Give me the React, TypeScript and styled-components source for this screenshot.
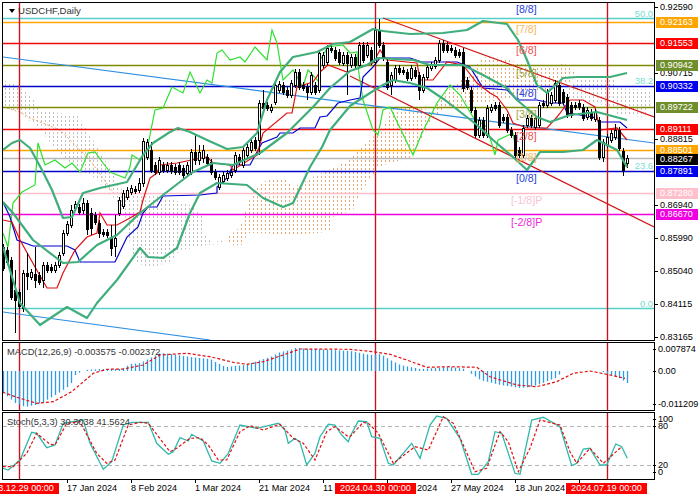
import React from "react";
import styled, { createGlobalStyle } from "styled-components";

type Pt = [number, number];
const FONT = `"Liberation Sans", Arial, sans-serif`;

const GlobalStyle = createGlobalStyle`
  html, body { margin: 0; padding: 0; background: #fff; }
  #root { width: 700px; height: 500px; }
`;

const Screen = styled.div`
  width: 700px;
  height: 500px;
  box-sizing: border-box;
  padding: 2px 0 0 2px;
  overflow: hidden;
  display: flex;
  flex-direction: column;
  background: #fff;
  font-family: ${FONT};
`;
const PaneRow = styled.div<{ $h: number; $gap: number }>`
  display: flex;
  flex: none;
  height: ${(p) => p.$h}px;
  margin-bottom: ${(p) => p.$gap}px;
`;
const Plot = styled.div`
  position: relative;
  flex: none;
  width: 653px;
  box-sizing: border-box;
  border: 1px solid #000;
  overflow: hidden;
  svg { display: block; }
`;
const Axis = styled.div<{ $rows: string; $inset: number }>`
  position: relative;
  flex: 1;
  display: grid;
  grid-template-rows: ${(p) => p.$rows};
  padding-left: ${(p) => p.$inset}px;
  padding-top: ${(p) => (p.$inset === 5 ? 0 : 2)}px;
  box-sizing: border-box;
`;
const AxisLabel = styled.span`
  position: relative;
  height: 10px;
  line-height: 10px;
  font-size: 9.1px;
  color: #000;
  white-space: nowrap;
  &::before {
    content: "";
    position: absolute;
    left: -5px;
    top: 5px;
    width: 3px;
    height: 1px;
    background: #000;
  }
`;
const AxisTag = styled.span<{ $bg: string }>`
  position: absolute;
  left: 1px;
  width: 42px;
  box-sizing: border-box;
  padding-left: 4px;
  height: 11px;
  line-height: 11px;
  font-size: 9.1px;
  background: ${(p) => p.$bg};
  color: #fff;
  white-space: nowrap;
`;
const PaneTitle = styled.span`
  position: absolute;
  left: 4px;
  top: 3px;
  font-size: 9.3px;
  line-height: 12px;
  color: #333;
  white-space: nowrap;
`;
const SymbolBar = styled.div`
  position: absolute;
  left: 6px;
  top: 2px;
  display: flex;
  align-items: center;
  gap: 3px;
  font-size: 9.6px;
  line-height: 12px;
  color: #333;
`;
const Caret = styled.i`
  display: block;
  width: 0;
  height: 0;
  border-left: 3.5px solid transparent;
  border-right: 3.5px solid transparent;
  border-top: 4px solid #000;
`;
const TimeAxis = styled.div`
  position: relative;
  flex: 1;
  margin-left: -2px;
  padding-left: 67px;
  display: grid;
  grid-template-columns: repeat(9, 64px);
`;
const TimeLabel = styled.span<{ $pad?: number }>`
  position: relative;
  padding-top: 3px;
  padding-left: ${(p) => p.$pad || 0}px;
  font-size: 9.1px;
  line-height: 11px;
  color: #000;
  white-space: nowrap;
  &::before {
    content: "";
    position: absolute;
    left: 0;
    top: 0;
    width: 1px;
    height: 3px;
    background: #000;
  }
`;
const TimeTag = styled.span`
  position: absolute;
  top: 3px;
  z-index: 1;
  box-sizing: border-box;
  width: 81px;
  height: 11px;
  line-height: 11px;
  font-size: 9.1px;
  text-align: center;
  background: #f00;
  color: #fff;
  white-space: nowrap;
`;
const ChartText = styled.text<{ $c: string; $size: number }>`
  font-family: ${FONT};
  font-size: ${(p) => p.$size}px;
  fill: ${(p) => p.$c};
`;

/* ---------- data: everything is in page pixels ---------- */
const z = (pts: number[][], ox: number, oy: number): Pt[] =>
  pts.map(([x, y]) => [ox + x / 3, oy + y / 3]);
const pl = (pts: Pt[]) => pts.map((p) => `${p[0].toFixed(1)},${p[1].toFixed(1)}`).join(" ");
const interp = (pts: Pt[], x: number) => {
  for (let i = 1; i < pts.length; i++) {
    if (x <= pts[i][0]) {
      const [a, b] = pts[i - 1];
      const [c, d] = pts[i];
      return b + ((d - b) * (x - a)) / (c - a || 1);
    }
  }
  return pts[pts.length - 1][1];
};

const hLines: [number, string][] = [
  [18.5, "#55d0c8"], [22.5, "#ffa500"], [43.5, "#f00a0a"], [65.5, "#808a00"], [86.5, "#0000c8"],
  [107.5, "#808a00"], [129.5, "#f00a0a"], [150.5, "#ffa500"], [158.5, "#b8b8b8"], [171.5, "#0000c8"],
  [193.5, "#ffbccb"], [214.5, "#f000e0"], [308.5, "#55d0c8"],
];

const upper: Pt[] = [[3,150],[12,143],[20,140],[30,148],[42,170],[52,190],[63,218],[72,217],[83,193],[100,188],[127,182],[143,155],[153,143],[170,132],[178,128],[190,132],[207,140],[227,149],[243,147],[257,133],[267,100],[280,72],[293,57],[317,52],[333,44],[350,42],[373,29],[383,31],[410,34],[443,33],[467,30],[483,21],[507,24],[518,40],[527,60],[537,85],[547,93],[563,78],[577,77],[610,77],[627,73]];
const middle: Pt[] = [[3,202],[13,213],[33,240],[63,263],[78,262],[97,245],[117,235],[140,213],[163,195],[193,172],[213,163],[233,165],[260,153],[287,133],[313,107],[330,88],[350,71],[367,65],[378,58],[413,60],[430,65],[463,65],[483,75],[507,88],[517,100],[537,117],[550,122],[570,115],[597,112],[627,120]];
const lower: Pt[] = [[3,247],[13,280],[20,303],[40,325],[67,307],[87,318],[97,303],[117,280],[140,248],[148,257],[163,258],[177,248],[190,213],[200,193],[217,183],[247,185],[263,198],[283,207],[293,203],[310,167],[322,147],[330,130],[350,106],[370,93],[383,85],[393,80],[410,83],[427,88],[445,100],[477,125],[493,140],[513,157],[527,170],[540,152],[563,152],[583,150],[597,140],[617,150],[627,167]];
const tenkan: Pt[] = [[3,220],[12,222],[20,240],[35,267],[47,288],[57,288],[63,273],[75,250],[87,237],[97,233],[100,213],[107,225],[117,225],[130,218],[140,212],[143,200],[150,178],[157,173],[160,165],[177,163],[207,157],[213,163],[230,165],[233,170],[257,155],[263,133],[287,113],[292,113],[297,87],[313,82],[320,72],[328,65],[347,72],[373,63],[380,50],[387,60],[417,63],[420,80],[433,80],[447,62],[463,65],[477,83],[490,93],[497,97],[507,110],[513,123],[527,128],[547,128],[557,117],[570,100],[583,100],[595,107],[600,130],[617,128],[627,140]];
const kijun: Pt[] = [[3,202],[10,217],[17,240],[33,246],[67,246],[75,250],[80,262],[115,262],[127,237],[138,227],[143,213],[148,207],[157,207],[163,196],[200,195],[217,193],[217,187],[227,178],[233,165],[250,165],[257,152],[262,143],[277,137],[280,133],[293,133],[300,128],[315,128],[320,117],[327,116],[338,103],[350,100],[360,98],[363,77],[373,67],[380,58],[410,58],[422,62],[457,62],[470,67],[483,88],[507,90],[517,100],[537,100],[550,103],[563,103],[567,113],[593,117],[600,122],[620,122],[627,128]];
const chikou: Pt[] = [[3,233],[8,247],[13,203],[22,192],[35,185],[38,143],[45,165],[55,160],[65,168],[72,163],[80,172],[88,153],[95,152],[103,163],[110,172],[125,178],[130,167],[132,155],[140,160],[147,150],[155,110],[163,108],[172,87],[183,93],[190,72],[200,93],[207,80],[212,83],[217,53],[222,50],[230,60],[240,57],[245,62],[255,47],[267,60],[272,30],[277,43],[283,80],[293,70],[303,87],[308,70],[320,83],[320,60],[328,47],[343,45],[350,53],[357,52],[358,67],[363,100],[373,130],[378,135],[383,110],[390,107],[413,155],[422,133],[437,103],[450,85],[460,95],[473,117],[487,127],[495,155],[498,140],[513,133],[517,155],[523,155]];

const grayCloud: Pt[] = [[3,80],[15,84],[30,95],[40,110],[60,113],[78,116],[90,135],[105,160],[115,178],[125,195],[140,195],[165,197],[190,205],[203,215],[203,233],[213,242],[225,240],[225,244],[205,245],[195,248],[180,250],[170,262],[150,268],[135,262],[128,235],[125,215],[112,195],[95,178],[70,165],[40,130],[20,112],[3,107]];
const peachCloud: Pt[] = [[225,240],[240,227],[245,213],[253,190],[267,180],[287,180],[293,187],[313,177],[350,160],[360,147],[370,140],[383,127],[392,107],[413,107],[430,110],[450,88],[470,73],[483,57],[507,58],[517,63],[550,68],[563,63],[577,72],[570,82],[540,92],[500,100],[445,108],[430,123],[413,157],[377,167],[375,172],[360,193],[353,210],[333,217],[330,230],[320,233],[287,235],[260,233],[247,233],[243,245],[233,245]];
const grayCloud2: Pt[] = [[577,78],[617,78],[617,88],[653,90],[653,103],[643,117],[617,115],[613,107],[563,97]];
const peachEdge: Pt[] = [[3,107],[20,112],[30,118],[60,130],[90,160],[115,195]];

/* x, top, bottom, black, [wick high, wick low] */
const C: number[][] = [
[3,247,268,1],[7,250,262,1],[11,260,297,1],[15,290,300,1,270,333],[19,292,306,1],[23,273,308,0,270,312],[27,273,276,1,253,290],[31,272,277,0],[35,274,280,1,247,288],[39,275,282,1],[43,265,280,0,262,288],[47,265,270,1],[51,267,270,1],[55,265,270,0],[59,255,265,0],[63,233,253,0],[67,224,233,0],[71,210,225,0,205,228],[75,204,208,0],[79,207,212,1],[83,203,210,0,198,214],[87,203,229,1,200,235],[91,213,228,1,208,235],[95,215,222,1],[99,223,233,1,220,238],[103,232,234,1],[107,232,235,1],[111,237,248,1,225,256],[115,238,246,0,215,257],[119,200,213,0],[123,193,206,0],[127,190,197,0],[131,188,192,0],[135,189,191,1],[139,183,190,0,178,193],[143,141,183,0,138,187],[147,142,157,0],[151,150,170,1,142,173],[155,165,172,1],[159,160,172,0],[163,165,170,1],[167,165,170,0],[171,165,171,1],[175,167,172,1],[179,165,172,1],[183,168,175,1],[187,165,173,0],[191,152,172,0],[195,152,160,1,135,165],[199,152,160,0,145,165],[203,150,158,0,145,163],[207,157,163,1],[211,162,172,1],[215,172,177,1],[219,177,187,0],[223,175,181,0],[227,173,178,0],[231,172,175,0],[235,155,170,0],[239,157,162,1],[243,150,165,0],[247,147,155,0],[251,142,150,0],[255,140,148,1],[259,103,140,0,100,155],[263,103,108,1,90,112],[267,105,108,1],[271,107,110,0],[275,85,102,0,80,105],[279,84,90,0],[283,85,92,1],[287,90,95,1],[291,83,95,0],[295,72,85,0],[299,72,87,1],[303,85,88,1],[307,87,92,1,84,100],[311,75,92,0],[315,85,92,1],[319,53,90,0],[323,55,65,0],[327,48,62,0],[331,48,50,1],[335,50,58,1],[339,52,62,1],[343,55,63,0],[347,55,63,1,52,95],[351,57,65,0],[355,57,65,1],[359,45,65,0],[363,45,60,1],[367,45,55,0],[371,50,62,1],[375,30,62,0],[379,30,45,1,19,48],[383,45,58,1],[387,62,87,1],[391,75,85,0,72,95],[395,68,80,0],[399,68,72,1],[403,70,72,1],[407,72,78,1],[411,68,78,0],[415,70,76,1],[419,75,90,1,72,100],[423,77,90,0],[427,67,77,0],[431,65,68,0],[435,60,66,0],[439,43,60,0],[443,43,50,1],[447,45,50,1],[451,48,50,1],[455,50,55,1],[459,52,55,1],[463,52,88,1,48,92],[467,80,87,1],[471,90,110,1],[475,110,135,1],[479,120,135,0],[483,120,135,1],[487,108,135,0],[491,107,110,0],[495,105,108,1],[499,105,125,1],[503,117,120,1],[507,117,130,1],[511,130,135,1],[515,135,155,1],[519,150,155,1],[523,128,155,0],[527,118,125,0],[531,118,125,1],[535,118,127,0],[539,105,125,0],[543,103,105,1],[547,92,105,0],[551,95,103,0],[555,83,100,0],[559,85,103,1],[563,92,102,1],[567,97,115,1],[571,105,115,1],[575,105,107,1],[579,103,107,1],[583,107,118,1],[587,110,117,0],[591,112,118,1],[595,112,119,0],[599,120,157,1,117,160],[603,142,157,0,139,162],[607,137,145,0],[611,133,140,0],[615,130,137,0,124,140],[619,130,148,1],[623,151,170,1,148,176],[627,158,163,0,155,168],
];

const murrey: [string, number, number, string][] = [
  ["[8/8]", 516, 13, "#2a44e0"], ["[7/8]", 516, 33, "#f7b860"], ["[6/8]", 516, 54, "#f05050"],
  ["[5/8]", 516, 77, "#a0a440"], ["[4/8]", 516, 97, "#2a44e0"], ["[3/8]", 516, 118, "#a0a440"],
  ["[2/8]", 516, 140, "#f05050"], ["[1/8]", 516, 161, "#f7b860"], ["[0/8]", 516, 182, "#2a44e0"],
  ["[-1/8]P", 511, 204, "#f8c4d0"], ["[-2/8]P", 511, 226, "#ee28dc"],
];
const fibs: [string, number][] = [["50.0", 17], ["38.2", 84], ["23.6", 169], ["0.0", 307]];

const macdHist: Pt[] = [[3,393],[8,397],[15,403],[20,405],[25,407],[35,405],[43,402],[50,398],[60,392],[70,385],[75,375],[80,372],[85,370],[100,369],[120,369],[125,367],[130,364],[140,363],[150,358],[160,353],[170,354],[190,357],[210,359],[215,362],[225,367],[245,365],[260,360],[270,357],[280,352],[290,350],[295,348],[350,351],[370,355],[380,354],[390,360],[400,365],[420,369],[450,367],[465,369],[470,373],[480,380],[500,385],[520,388],[530,387],[540,384],[555,378],[562,372]];
const macdTail: Pt[] = [[597,371],[603,372],[610,375],[617,377],[627,383]];
const macdSig: Pt[] = [...z([[8,172],[60,190],[110,205],[160,200],[215,170],[280,115],[320,103],[370,102],[430,90],[480,60],[560,55],[630,65],[700,82],[740,88],[790,80],[850,60],[900,42],[1050,43]],0,335),
  ...z([[70,50],[120,58],[170,75],[230,97],[300,95],[380,97],[420,125],[500,150],[560,155],[620,140],[670,115],[720,108],[780,120],[825,130]],350,335)];
const stochK: Pt[] = [...z([[8,400],[25,405],[60,375],[95,292],[110,295],[140,338],[165,330],[190,265],[250,255],[270,325],[310,403],[335,380],[370,270],[395,262],[445,262],[470,325],[505,358],[520,350],[540,308],[565,318],[575,298],[610,318],[635,378],[660,385],[685,355],[720,270],[770,280],[835,265],[855,285],[865,325],[885,310],[900,322],[920,390],[945,355],[960,305],[985,268],[1005,270],[1025,300],[1045,320]],0,335),
  ...z([[0,305],[25,258],[50,260],[65,305],[90,310],[115,385],[130,390],[185,325],[210,370],[240,270],[260,243],[290,250],[330,310],[365,418],[385,418],[415,380],[435,290],[455,295],[495,415],[510,418],[545,255],[580,247],[630,275],[665,392],[680,385],[700,342],[720,340],[750,390],[770,390],[797,327],[815,335],[832,370]],350,335)];
const stochD: Pt[] = [...z([[8,395],[40,395],[80,355],[110,295],[150,328],[165,330],[200,265],[240,260],[290,355],[320,385],[345,375],[385,270],[420,262],[445,265],[510,350],[530,340],[570,310],[600,308],[625,330],[655,375],[680,375],[720,290],[750,272],[790,285],[840,268],[880,310],[910,325],[945,375],[980,290],[1005,275],[1045,305]],0,335),
  ...z([[0,305],[40,262],[55,265],[85,295],[130,385],[195,335],[235,345],[280,245],[310,265],[340,330],[375,410],[410,400],[450,290],[475,320],[505,410],[540,340],[570,255],[630,270],[660,350],[680,385],[720,340],[760,385],[815,335]],350,335)];

const vLines = [19.5, 375.5, 607.5];
const RED_V = "#d01018";
const THIN = 1.35;

const mainTags: [string, number, string][] = [
  ["0.92163", 22, "#ffa500"], ["0.91553", 43, "#f00"], ["0.90942", 65, "#6f8e2c"], ["0.90332", 86, "#0000f0"],
  ["0.89722", 107, "#6f8e2c"], ["0.89111", 129, "#f00"], ["0.88501", 150, "#ffa500"], ["0.88267", 159, "#000"],
  ["0.87891", 171, "#0000f0"], ["0.87280", 193, "#ffc0cb"], ["0.86670", 214, "#f000e0"],
];
const scale = ["0.92590", "", "0.90715", "", "0.88815", "", "0.86940", "0.85990", "0.85040", "0.84115", "0.83165"];
const macdScale = ["0.007874", "0.00", "-0.011209"];
const stochScale = ["100", "80", "20", "0"];
const dates: [string, number?][] = [["17 Jan 2024"], ["8 Feb 2024"], ["1 Mar 2024"], ["21 Mar 2024"], ["11"], ["2024", 30], ["27 May 2024"], ["18 Jun 2024"], [""]];
const timeTags: [string, number][] = [["2023.12.29 00:00", -22], ["2024.04.30 00:00", 335], ["2024.07.19 00:00", 566]];

const VLines = ({ y1, y2 }: { y1: number; y2: number }) => (
  <>
    {vLines.map((x) => (
      <line key={x} x1={x} x2={x} y1={y1} y2={y2} stroke={RED_V} strokeWidth={THIN} />
    ))}
  </>
);

const MainSvg = () => (
  <svg width={651} height={337} viewBox="3 3 651 337">
    <defs>
      <pattern id="dotGray" width={4} height={4} patternUnits="userSpaceOnUse">
        <rect x={1} y={0} width={1} height={2} fill="#c4bebe" />
      </pattern>
      <pattern id="dotPeach" width={4} height={4} patternUnits="userSpaceOnUse">
        <rect x={1} y={0} width={1} height={2} fill="#e6a870" />
      </pattern>
    </defs>
    <polygon points={pl(grayCloud)} fill="url(#dotGray)" />
    <polygon points={pl(peachCloud)} fill="url(#dotPeach)" />
    <polygon points={pl(grayCloud2)} fill="url(#dotGray)" />
    <polyline points={pl(peachEdge)} fill="none" stroke="#e6a870" strokeWidth={1} strokeDasharray="2 2" />
    {hLines.map(([y, c]) => (
      <line key={y} x1={3} x2={654} y1={y} y2={y} stroke={c} strokeWidth={THIN} />
    ))}
    <VLines y1={3} y2={340} />
    <line x1={3} y1={57} x2={654} y2={143} stroke="#2f8fe0" strokeWidth={1.2} />
    <line x1={3} y1={312} x2={210} y2={340} stroke="#2f8fe0" strokeWidth={1.2} />
    <line x1={383} y1={18} x2={654} y2={117} stroke="#d01818" strokeWidth={1.2} />
    <line x1={350} y1={76} x2={654} y2={227} stroke="#d01818" strokeWidth={1.2} />
    <polyline points={pl(chikou)} fill="none" stroke="#2fe02f" strokeWidth={1.2} />
    <polyline points={pl(kijun)} fill="none" stroke="#0000d0" strokeWidth={1.2} />
    <polyline points={pl(tenkan)} fill="none" stroke="#e01010" strokeWidth={1.2} />
    {C.map(([x, t, b, k, h, l]) => (
      <g key={x} shapeRendering="crispEdges">
        <line x1={x + 0.5} x2={x + 0.5} y1={h ?? t - 3} y2={l ?? b + 3} stroke="#000" />
        <rect x={x - 0.5} y={t + 0.5} width={2} height={Math.max(b - t, 1)} fill={k ? "#000" : "#fff"} stroke="#000" />
      </g>
    ))}
    {[upper, middle, lower].map((p, i) => (
      <polyline key={i} points={pl(p)} fill="none" stroke="#3fae7c" strokeWidth={2.2} strokeLinejoin="round" />
    ))}
    {murrey.map(([t, x, y, c]) => (
      <ChartText key={t} x={x} y={y} $c={c} $size={10.6}>{t}</ChartText>
    ))}
    {fibs.map(([t, y]) => (
      <ChartText key={t} x={653} y={y} $c="#78dcd2" $size={9.4} textAnchor="end">{t}</ChartText>
    ))}
  </svg>
);

const MacdSvg = () => {
  const bars: React.ReactNode[] = [];
  for (let x = 3; x <= 627; x += 4) {
    const y = x <= 562 ? interp(macdHist, x) : x >= 603 ? interp(macdTail, x) : 371;
    if (Math.abs(y - 371) < 0.5) continue;
    bars.push(<line key={x} x1={x + 0.5} x2={x + 0.5} y1={371} y2={y} stroke="#2f9be0" strokeWidth={1.3} />);
  }
  return (
    <svg width={651} height={67} viewBox="3 343 651 67">
      <VLines y1={343} y2={410} />
      {bars}
      <polyline points={pl(macdSig)} fill="none" stroke="#e01010" strokeWidth={1.2} strokeDasharray="3 2" />
    </svg>
  );
};

const StochSvg = () => (
  <svg width={651} height={66} viewBox="3 413 651 66">
    <line x1={3} x2={654} y1={426.5} y2={426.5} stroke="#b4b4b4" strokeDasharray="4 3" />
    <line x1={3} x2={654} y1={465.5} y2={465.5} stroke="#b4b4b4" strokeDasharray="4 3" />
    <VLines y1={413} y2={479} />
    <polyline points={pl(stochK)} fill="none" stroke="#30b8ac" strokeWidth={1.3} />
    <polyline points={pl(stochD)} fill="none" stroke="#e01010" strokeWidth={1.2} strokeDasharray="3 2" />
  </svg>
);

export default function App() {
  return (
    <Screen>
      <GlobalStyle />
      <PaneRow $h={339} $gap={1}>
        <Plot>
          <MainSvg />
          <SymbolBar>
            <Caret />
            USDCHF,Daily
          </SymbolBar>
        </Plot>
        <Axis $rows="repeat(10, 33px) 1fr" $inset={5}>
          {scale.map((t, i) => (t ? <AxisLabel key={t}>{t}</AxisLabel> : <span key={i} />))}
          {mainTags.map(([t, y, bg]) => (
            <AxisTag key={t} $bg={bg} style={{ top: y - 7 }}>{t}</AxisTag>
          ))}
        </Axis>
      </PaneRow>
      <PaneRow $h={69} $gap={1}>
        <Plot>
          <MacdSvg />
          <PaneTitle>MACD(12,26,9) -0.003575 -0.002372</PaneTitle>
        </Plot>
        <Axis $rows="22px 33px 1fr" $inset={3}>
          {macdScale.map((t) => (
            <AxisLabel key={t}>{t}</AxisLabel>
          ))}
        </Axis>
      </PaneRow>
      <PaneRow $h={68} $gap={0}>
        <Plot>
          <StochSvg />
          <PaneTitle>Stoch(5,3,3) 30.3038 41.5624</PaneTitle>
        </Plot>
        <Axis $rows="7px 39px 7px 1fr" $inset={3}>
          {stochScale.map((t) => (
            <AxisLabel key={t}>{t}</AxisLabel>
          ))}
        </Axis>
      </PaneRow>
      <TimeAxis>
        {dates.map(([t, pad], i) => (
          <TimeLabel key={i} $pad={pad}>{t}</TimeLabel>
        ))}
        {timeTags.map(([t, x]) => (
          <TimeTag key={t} style={{ left: x }}>{t}</TimeTag>
        ))}
      </TimeAxis>
    </Screen>
  );
}
